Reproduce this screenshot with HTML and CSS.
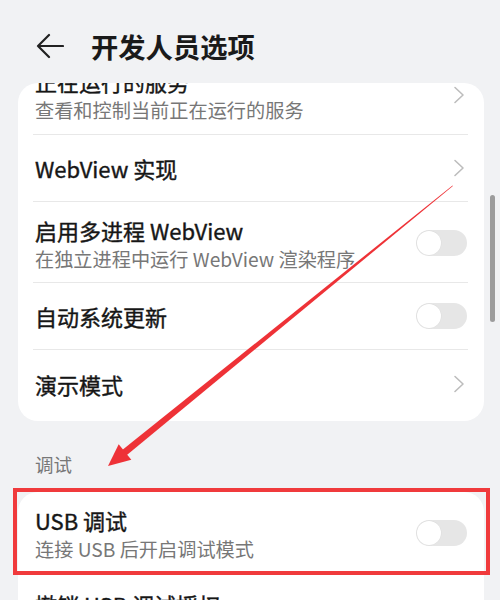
FILE: index.html
```html
<!DOCTYPE html>
<html lang="zh-CN">
<head>
<meta charset="utf-8">
<link rel="stylesheet" href="styles.css">
</head>
<body>
<div class="screen">
  <header class="topbar">
    <svg class="back" width="28" height="26" viewBox="0 0 28 26"><path d="M13 2 L2 13 L13 24 M2 13 H27" fill="none" stroke="#222" stroke-width="2.2" stroke-linecap="round" stroke-linejoin="round"/></svg>
    <h1 class="title">开发人员选项</h1>
  </header>
  <main class="scroll">
    <section class="card first">
      <div class="row two shifted">
        <div class="texts"><div class="t">正在运行的服务</div><div class="s">查看和控制当前正在运行的服务</div></div>
        <svg class="chev" width="12" height="18" viewBox="0 0 12 18"><path d="M2 1.5 L10 9 L2 16.5" fill="none" stroke="#bdbdbd" stroke-width="1.6" stroke-linecap="round" stroke-linejoin="round"/></svg>
      </div>
      <div class="row one">
        <div class="texts"><div class="t">WebView 实现</div></div>
        <svg class="chev" width="12" height="18" viewBox="0 0 12 18"><path d="M2 1.5 L10 9 L2 16.5" fill="none" stroke="#bdbdbd" stroke-width="1.6" stroke-linecap="round" stroke-linejoin="round"/></svg>
      </div>
      <div class="row two">
        <div class="texts"><div class="t">启用多进程 WebView</div><div class="s">在独立进程中运行 WebView 渲染程序</div></div>
        <span class="toggle"><span class="knob"></span></span>
      </div>
      <div class="row one">
        <div class="texts"><div class="t">自动系统更新</div></div>
        <span class="toggle"><span class="knob"></span></span>
      </div>
      <div class="row one last">
        <div class="texts"><div class="t">演示模式</div></div>
        <svg class="chev" width="12" height="18" viewBox="0 0 12 18"><path d="M2 1.5 L10 9 L2 16.5" fill="none" stroke="#bdbdbd" stroke-width="1.6" stroke-linecap="round" stroke-linejoin="round"/></svg>
      </div>
    </section>
    <div class="section-label">调试</div>
    <section class="card second">
      <div class="row two highlighted">
        <div class="texts"><div class="t">USB 调试</div><div class="s">连接 USB 后开启调试模式</div></div>
        <span class="toggle"><span class="knob"></span></span>
      </div>
      <div class="row two lower">
        <div class="texts"><div class="t">撤销 USB 调试授权</div><div class="s">撤销所有计算机的 USB 调试授权</div></div>
      </div>
    </section>
    <div class="scrollbar"></div>
    <svg class="annot" width="500" height="517" viewBox="0 83 500 517">
      <polygon fill="#ee3237" points="452.5,185.4 452.9,186.0 125.7,456.1 121.3,450.7"/>
      <polygon fill="#ee3237" points="108,466 118.7,444.2 131.3,459.8"/>
    </svg>
  </main>
</div>
</body>
</html>
```

FILE: styles.css
```css
* { box-sizing: border-box; }
html, body { margin: 0; padding: 0; }
body {
  background: #f1f2f4;
  font-family: "Noto Sans CJK SC", "Noto Sans", sans-serif;
  color: #1b1b1b;
}
.screen {
  width: 500px;
  height: 600px;
  overflow: hidden;
  display: flex;
  flex-direction: column;
}
.topbar {
  height: 83px;
  flex: none;
  display: flex;
  align-items: center;
  padding: 9px 0 0 36px;
}
.back { display: block; }
.title {
  margin: 0 0 0 27px;
  font-size: 27.3px;
  font-weight: 700;
  line-height: 34px;
  color: #1a1a1a;
}
.scroll {
  position: relative;
  flex: 1;
  overflow: hidden;
}
.card {
  background: #fff;
  border-radius: 20px;
  margin: 0 16px 0 18px;
}
.card.first {
  overflow: hidden;
  padding-bottom: 4px;
}
.row {
  display: flex;
  align-items: center;
  margin: 0 16px 0 15px;
  padding: 0 1px 0 2px;
}
.row + .row { border-top: 1px solid #e8e8e8; }
.row.shifted { margin-top: -30px; }
.row.one { height: 67px; }
.row.last { height: 68px; }
.row.two {
  height: 81px;
  padding-top: 15px;
  padding-bottom: 12px;
  align-items: center;
}
.row.lower { padding-top: 20px; }
.texts { flex: 1; min-width: 0; }
.t {
  font-size: 22px;
  line-height: 26px;
  font-weight: 400;
  color: #161616;
  -webkit-text-stroke: 0.4px #161616;
  white-space: nowrap;
}
.row.two .texts .s { margin-top: 4px; }
.s {
  font-size: 19.2px;
  line-height: 24px;
  color: #777;
  white-space: nowrap;
}
.chev { display: block; flex: none; margin-right: 2px; }
.toggle {
  flex: none;
  position: relative;
  width: 51px;
  height: 26px;
  border-radius: 13px;
  background: #e6e6e6;
}
.knob {
  position: absolute;
  left: 1px;
  top: 1px;
  width: 24px;
  height: 24px;
  border-radius: 50%;
  background: #fff;
  box-shadow: 0 0 0 0.5px #dcdcdc;
}
.row.two .toggle { align-self: center; margin-top: -2px; }
.section-label {
  padding: 32px 0 17px 35px;
  font-size: 18.5px;
  line-height: 22px;
  color: #777;
}
.highlighted { position: relative; }
.highlighted::after {
  content: "";
  position: absolute;
  left: -20px;
  right: -22px;
  top: -4px;
  bottom: -2px;
  border: 4.5px solid #f03a3c;
  pointer-events: none;
}
.scrollbar {
  position: absolute;
  left: 490px;
  top: 112px;
  width: 5px;
  height: 127px;
  border-radius: 3px;
  background: #9c9c9c;
}
.annot {
  position: absolute;
  left: 0;
  top: 0;
  pointer-events: none;
}
```
